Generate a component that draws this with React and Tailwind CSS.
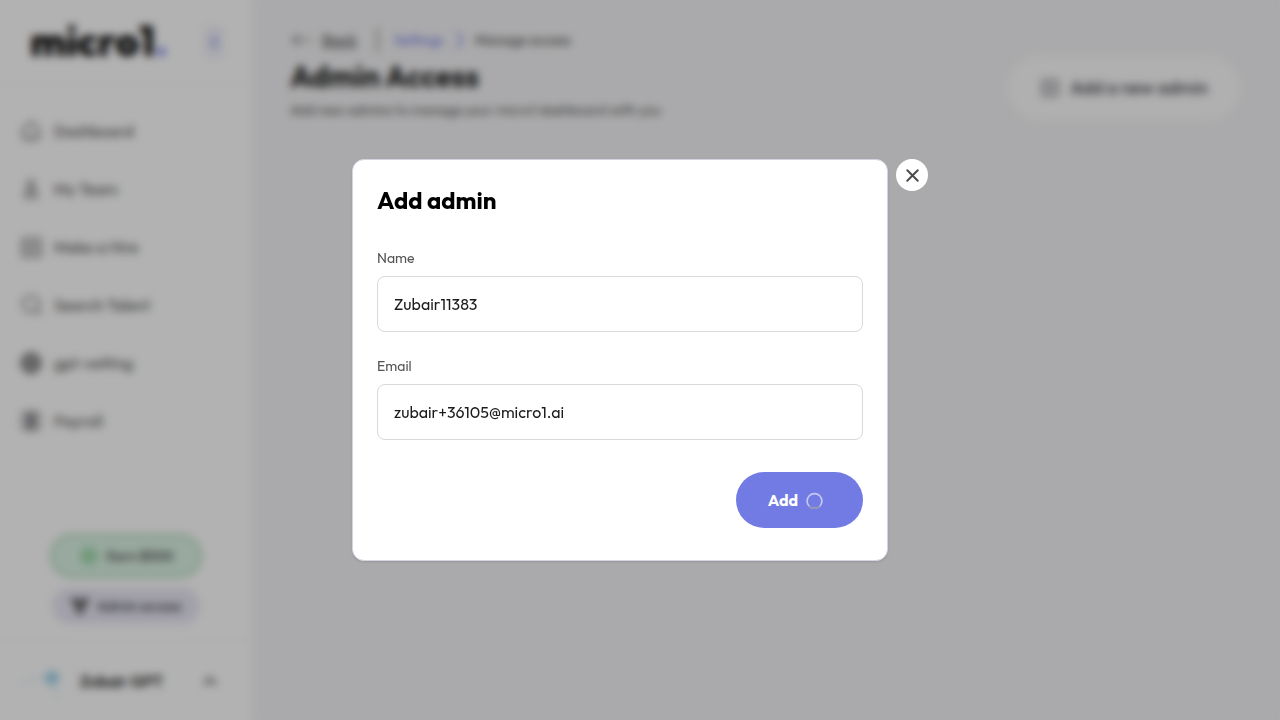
import { useState } from "react";
import {
  ChevronLeft,
  ChevronUp,
  CircleDollarSign,
  Globe,
  Search,
  SquarePlus,
  X,
} from "lucide-react";

function HomeIcon() {
  return (
    <svg width="22" height="22" viewBox="0 0 22 22" fill="none" stroke="currentColor" strokeWidth="1.6" aria-hidden="true">
      <path d="M3 9.5 L9.5 3 Q11 1.8 12.5 3 L19 9.5 V16 Q19 19.5 15.5 19.5 H6.5 Q3 19.5 3 16 Z" />
      <path d="M8 15.5 H14" />
    </svg>
  );
}

function PersonIcon() {
  return (
    <svg width="22" height="22" viewBox="0 0 22 22" fill="none" stroke="currentColor" strokeWidth="1.6" aria-hidden="true">
      <circle cx="11" cy="6" r="3.5" />
      <path d="M5 19.5 Q5 11.5 11 11.5 Q17 11.5 17 19.5 Z" />
      <path d="M11 12 V16" />
    </svg>
  );
}

function PayrollIcon() {
  return (
    <svg width="22" height="22" viewBox="0 0 22 22" fill="none" stroke="currentColor" strokeWidth="1.4" aria-hidden="true">
      <rect x="2.5" y="2.5" width="17" height="17" rx="3" />
      <rect x="7.5" y="5" width="7" height="12" fill="#777780" stroke="#777780" />
    </svg>
  );
}

function AccessIcon() {
  return (
    <svg width="18" height="18" viewBox="0 0 18 18" fill="none" stroke="currentColor" strokeWidth="2.4" aria-hidden="true">
      <circle cx="4" cy="4" r="2.4" />
      <circle cx="14" cy="4" r="2.4" />
      <circle cx="9" cy="13.5" r="2.6" />
      <path d="M4 7 L9 11 L14 7 M9 4 V11" />
    </svg>
  );
}

const navItems = [
  { label: "Dashboard", icon: <HomeIcon /> },
  { label: "My Team", icon: <PersonIcon /> },
  { label: "Make a Hire", icon: <SquarePlus size={23} strokeWidth={2} /> },
  { label: "Search Talent", icon: <Search size={24} strokeWidth={1.5} /> },
  { label: "gpt-vetting", icon: <Globe size={22} strokeWidth={2.5} /> },
  { label: "Payroll", icon: <PayrollIcon /> },
];

function Sidebar() {
  return (
    <aside className="flex w-[252px] shrink-0 flex-col bg-white">
      <div className="flex h-[84px] items-center justify-between border-b border-neutral-100 pr-7 pl-[30px]">
        <a href="#home" className="text-[41px] leading-none font-extrabold text-black">
          micro1<span className="text-[#7a81ea]">.</span>
        </a>
        <button
          type="button"
          aria-label="Collapse menu"
          className="flex h-8 w-5 items-center justify-center rounded-md bg-[#f1f1fa] text-[#7f86ea]"
        >
          <ChevronLeft size={18} strokeWidth={3} />
        </button>
      </div>
      <nav className="flex flex-1 flex-col pt-[18px]">
        {navItems.map(({ label, icon }) => (
          <a
            key={label}
            href="#menu"
            className="flex h-[58px] items-center pl-5 text-base text-[#4c4c4c]"
          >
            <span className="flex w-[34px]">{icon}</span>
            {label}
          </a>
        ))}
      </nav>
      <div className="flex flex-col items-center gap-2.5 pb-4">
        <button
          type="button"
          className="flex h-11 w-[152px] items-center justify-center gap-2 rounded-full border-3 border-[#b4ddbe] bg-[#dcf3e6] text-sm font-medium text-neutral-700"
        >
          <CircleDollarSign size={20} className="fill-[#a5dcb0] text-[#a5dcb0]" />
          Earn $500
        </button>
        <button
          type="button"
          className="flex h-9 w-[148px] items-center justify-center gap-2 rounded-full bg-[#e8e7f4] text-sm font-medium text-neutral-700"
        >
          <AccessIcon />
          Admin access
        </button>
      </div>
      <div className="flex h-20 items-center border-t border-neutral-100 pr-8 pl-5">
        <svg width="44" height="44" viewBox="0 0 44 44" aria-hidden="true">
          <path d="M0 24 L29 17 L38 40" fill="none" stroke="#dceff6" strokeWidth="2" />
          <circle cx="32" cy="19" r="7" fill="#a0d3ea" />
        </svg>
        <span className="flex-1 pl-4 text-base font-semibold text-neutral-900">Zubair GPT</span>
        <ChevronUp size={20} strokeWidth={3} className="text-neutral-600" />
      </div>
    </aside>
  );
}

function AdminPage() {
  return (
    <main className="flex flex-1 items-start justify-between bg-[#f4f4f6] pr-10 pl-[38px]">
      <div className="pt-7">
        <div className="flex h-6 items-center text-sm">
          <a href="#back" className="flex items-center gap-2 text-base text-neutral-700">
            <svg width="24" height="16" viewBox="0 0 24 16" fill="none" stroke="currentColor" strokeWidth="1.2" aria-hidden="true">
              <path d="M22 8 H3 M9 3 L3 8 L9 13" />
            </svg>
            <span className="underline">Back</span>
          </a>
          <span className="mr-4 ml-5 h-6 w-px bg-neutral-800" />
          <a href="#settings" className="text-[#6b73e6]">Settings</a>
          <svg width="16" height="16" viewBox="0 0 18 18" fill="none" stroke="#9398ee" strokeWidth="2.5" className="mx-2" aria-hidden="true">
            <path d="M5 2 H9 L13 9 L9 16 H5" />
          </svg>
          <span className="text-neutral-700">Manage access</span>
        </div>
        <h1 className="mt-1 text-3xl leading-10 font-bold text-neutral-900">Admin Access</h1>
        <p className="text-sm leading-7 text-neutral-600">
          Add new admins to manage your micro1 dashboard with you
        </p>
      </div>
      <button
        type="button"
        className="mt-14 flex h-16 items-center gap-2.5 rounded-full bg-[#fcfcfc] px-8 text-lg font-medium text-[#4a4a55]"
      >
        <SquarePlus size={20} strokeWidth={1.8} />
        Add a new admin
      </button>
    </main>
  );
}

function Field({ id, label, type, value, onChange }) {
  return (
    <div className="flex flex-col gap-2">
      <label htmlFor={id} className="text-sm text-[#555555]">
        {label}
      </label>
      <input
        id={id}
        type={type}
        value={value}
        onChange={(event) => onChange(event.target.value)}
        className="h-14 w-full rounded-lg border border-[#d9d9dc] bg-white px-4 text-base text-[#1c1c1c] outline-none"
      />
    </div>
  );
}

function AddAdminDialog() {
  const [name, setName] = useState("Zubair11383");
  const [email, setEmail] = useState("zubair+36105@micro1.ai");

  return (
    <div className="fixed inset-0 flex items-center justify-center bg-black/30 backdrop-blur-xs">
      <div className="flex items-start gap-2">
        <form
          role="dialog"
          aria-labelledby="dialog-title"
          onSubmit={(event) => event.preventDefault()}
          className="flex w-[536px] flex-col rounded-xl border border-[#d5d3e2] bg-white px-6 pt-6 pb-8 shadow-sm"
        >
          <h2 id="dialog-title" className="text-2xl font-bold text-black">
            Add admin
          </h2>
          <div className="mt-8 flex flex-col gap-6">
            <Field id="name" label="Name" type="text" value={name} onChange={setName} />
            <Field id="email" label="Email" type="email" value={email} onChange={setEmail} />
          </div>
          <button
            type="submit"
            className="mt-8 flex h-14 items-center gap-2 self-end rounded-full bg-[#727be4] pr-10 pl-8 text-base font-bold text-white"
          >
            Add
            <svg width="17" height="18" viewBox="0 0 17 18" fill="none" aria-hidden="true">
              <circle cx="8.5" cy="10" r="7.4" stroke="#c5c9f2" strokeWidth="1.7" />
              <path d="M3.3 15.2 A7.4 7.4 0 0 0 13.7 15.2" stroke="#9294ae" strokeWidth="1.8" />
            </svg>
          </button>
        </form>
        <button
          type="button"
          aria-label="Close"
          className="flex size-8 items-center justify-center rounded-full bg-white text-[#4a4a4f]"
        >
          <X size={21} strokeWidth={2.2} />
        </button>
      </div>
    </div>
  );
}

export default function App() {
  return (
    <div className="flex min-h-screen font-['Outfit','Lato',sans-serif]">
      <Sidebar />
      <AdminPage />
      <AddAdminDialog />
    </div>
  );
}
